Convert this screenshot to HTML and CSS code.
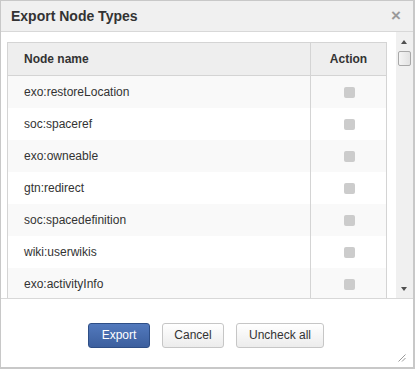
FILE: index.html
```html
<!DOCTYPE html>
<html>
<head>
<meta charset="utf-8">
<link rel="stylesheet" href="styles.css">
</head>
<body>
<div class="dialog">
  <div class="header">
    <span class="title">Export Node Types</span>
    <span class="close">×</span>
  </div>
  <div class="body">
    <div class="content">
      <table class="grid">
        <thead>
          <tr><th class="name-col">Node name</th><th class="action-col">Action</th></tr>
        </thead>
        <tbody>
          <tr><td>exo:restoreLocation</td><td class="action"><span class="check"></span></td></tr>
          <tr><td>soc:spaceref</td><td class="action"><span class="check"></span></td></tr>
          <tr><td>exo:owneable</td><td class="action"><span class="check"></span></td></tr>
          <tr><td>gtn:redirect</td><td class="action"><span class="check"></span></td></tr>
          <tr><td>soc:spacedefinition</td><td class="action"><span class="check"></span></td></tr>
          <tr><td>wiki:userwikis</td><td class="action"><span class="check"></span></td></tr>
          <tr><td>exo:activityInfo</td><td class="action"><span class="check"></span></td></tr>
        </tbody>
      </table>
    </div>
    <div class="scrollbar">
      <div class="arrow up"></div>
      <div class="thumb"></div>
      <div class="track"></div>
      <div class="arrow down"></div>
    </div>
  </div>
  <div class="footer">
    <button class="btn primary">Export</button>
    <button class="btn">Cancel</button>
    <button class="btn wide">Uncheck all</button>
    <svg class="grip" width="8" height="8" viewBox="0 0 8 8">
      <line x1="0.5" y1="7.5" x2="7.5" y2="0.5" stroke="#999" stroke-width="1"/>
      <line x1="4" y1="7.5" x2="7.5" y2="4" stroke="#999" stroke-width="1"/>
    </svg>
  </div>
</div>
</body>
</html>
```

FILE: styles.css
```css
html, body {
  margin: 0;
  padding: 0;
  background: #fff;
}
body {
  font-family: "Liberation Sans", Arial, sans-serif;
  font-size: 12px;
  color: #333;
}
.dialog {
  width: 415px;
  height: 369px;
  box-sizing: border-box;
  border: 1px solid #c8c8c8;
  border-right-width: 2px;
  border-bottom-width: 2px;
  display: flex;
  flex-direction: column;
  background: #fff;
}
.header {
  height: 30px;
  flex: none;
  background: #f0f0f0;
  border-bottom: 1px solid #d8d8d8;
  display: flex;
  align-items: center;
  justify-content: space-between;
  padding: 0 12px 0 10px;
}
.title {
  font-size: 14px;
  font-weight: bold;
  color: #333;
}
.close {
  font-size: 17px;
  font-weight: bold;
  color: #9a9a9a;
  line-height: 1;
  margin-top: -2px;
}
.body {
  height: 266px;
  flex: none;
  display: flex;
  border-bottom: 1px solid #d8d8d8;
  overflow: hidden;
}
.content {
  flex: 1;
  padding: 10px 8px 0 6px;
  overflow: hidden;
}
.grid {
  width: 380px;
  border-collapse: collapse;
  border: 1px solid #d4d4d4;
}
.grid th {
  background: #eeeeee;
  height: 32px;
  padding: 0;
  font-weight: bold;
  border-bottom: 1px solid #d4d4d4;
  text-align: left;
}
.grid th.name-col {
  padding-left: 16px;
}
.grid th.action-col {
  width: 75px;
  text-align: center;
  border-left: 1px solid #d4d4d4;
}
.grid td {
  height: 32px;
  padding: 0 0 0 16px;
}
.grid td.action {
  padding: 0;
  text-align: center;
  border-left: 1px solid #d4d4d4;
}
.grid tbody tr:nth-child(odd) {
  background: #f9f9f9;
}
.check {
  display: inline-block;
  width: 11px;
  height: 11px;
  border-radius: 2px;
  background: #cccccc;
  vertical-align: middle;
  margin-left: 2px;
}
.scrollbar {
  width: 17px;
  flex: none;
  background: #f0f0f0;
  display: flex;
  flex-direction: column;
  align-items: center;
}
.arrow {
  width: 17px;
  height: 17px;
  flex: none;
  position: relative;
}
.arrow::after {
  content: "";
  position: absolute;
  left: 5px;
  width: 0;
  height: 0;
  border-left: 3.5px solid transparent;
  border-right: 3.5px solid transparent;
}
.arrow.up::after {
  top: 8px;
  border-bottom: 4px solid #505050;
}
.arrow.down::after {
  top: 6px;
  border-top: 4px solid #505050;
}
.thumb {
  width: 13px;
  height: 15px;
  margin-top: 2px;
  box-sizing: border-box;
  border: 1px solid #a8a8a8;
  border-radius: 2px;
  background: linear-gradient(to right, #f4f4f4, #e2e2e2);
  flex: none;
}
.track {
  flex: 1;
}
.footer {
  flex: 1;
  display: flex;
  justify-content: center;
  align-items: center;
  gap: 12px;
  position: relative;
  padding: 4px 2px 0 0;
}
.btn {
  font-family: "Liberation Sans", Arial, sans-serif;
  font-size: 12px;
  color: #333;
  height: 25px;
  padding: 0 11px;
  border: 1px solid #c6c6c6;
  border-radius: 3px;
  background: linear-gradient(#ffffff, #ececec);
  min-width: 62px;
}
.btn.wide {
  padding: 0 12px;
}
.btn.primary {
  color: #fff;
  background: linear-gradient(#5279bd, #3c5f9e);
  border-color: #2e4e86;
}
.grip {
  position: absolute;
  right: 7px;
  bottom: 5px;
}
```
